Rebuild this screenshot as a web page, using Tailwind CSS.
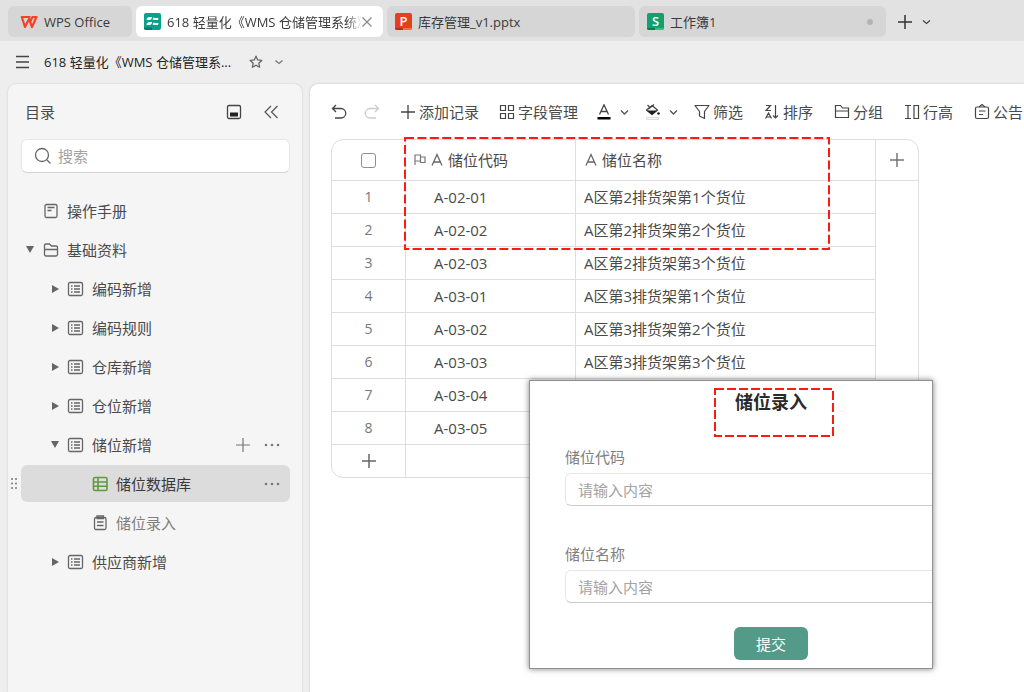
<!DOCTYPE html>
<html lang="zh-CN">
<head>
    <meta charset="UTF-8">
    <meta name="viewport" content="width=device-width, initial-scale=1.0">
    <title>618 轻量化《WMS 仓储管理系统》</title>
    <script src="https://cdn.jsdelivr.net/npm/@tailwindcss/browser@4"></script>
</head>
<body class="h-screen flex flex-col overflow-hidden bg-[#eeeeee] text-[15px] leading-5 text-[#4a4a4a] font-['Open_Sans','Noto_Sans_CJK_SC',sans-serif]">

    <!-- Window tabs -->
    <header class="shrink-0 flex items-center gap-1 h-[41px] pt-[6px] pb-1 px-2 bg-[#e2e2e2] text-[13px] text-[#3a3a3a]">
        <button class="flex items-center gap-1.5 w-[124px] h-[31px] px-3 rounded-md bg-[#d6d6d6]">
            <svg class="w-[18px] h-4" viewBox="0 0 18 16" fill="none" stroke="#f5402a" stroke-width="2.200" stroke-linejoin="round">
                <path d="M10.500 3H1.800L5 13 9 5l3 8L16.500 3H12.500l-2.500 5"/>
            </svg>
            WPS Office
        </button>
        <button class="flex items-center w-[247px] h-[31px] px-2 rounded-md bg-white">
            <svg class="shrink-0 w-[17px] h-[17px] mr-1.5" viewBox="0 0 17 17">
                <rect width="17" height="17" rx="2" fill="#0c9f89"/>
                <path d="M0 14.500h8V17H2a2 2 0 0 1-2-2z" fill="#067a69"/>
                <path d="M3 5l2-1h3L7.500 6 6 7H2.500zM9.500 4.500L11 5h3.500L14 7h-3.500L8.500 6.500zM3 10l2-1h3l-.5 2L6 12H2.500zM9.500 9.500L11 10h3.500L14 12h-3.500l-2-.5z" fill="#fff"/>
            </svg>
            <span class="flex-1 overflow-hidden whitespace-nowrap text-left mask-r-from-92%">618 轻量化《WMS 仓储管理系统》</span>
            <svg class="shrink-0 w-[10px] h-[10px] mr-[3px]" viewBox="0 0 10 10" stroke="#888" stroke-width="1.200"><path d="M.5.5l9 9M9.500.5l-9 9"/></svg>
        </button>
        <button class="flex items-center gap-1.5 w-[248px] h-[31px] px-2 rounded-md bg-[#d6d6d6]">
            <svg class="w-[17px] h-[17px]" viewBox="0 0 17 17">
                <rect width="17" height="17" rx="2" fill="#e2401f"/>
                <path d="M0 15h8v2H2a2 2 0 0 1-2-2z" fill="#b92c12"/><path d="M8 15h9a2 2 0 0 1-2 2H8z" fill="#ff6a45"/>
                <text x="8.500" y="13" font-size="13" font-weight="600" text-anchor="middle" fill="#fff">P</text>
            </svg>
            库存管理_v1.pptx
        </button>
        <button class="flex items-center gap-1.5 w-[247px] h-[31px] px-2 rounded-md bg-[#d6d6d6]">
            <svg class="w-[17px] h-[17px]" viewBox="0 0 17 17">
                <rect width="17" height="17" rx="2" fill="#12a06b"/>
                <path d="M0 15h8v2H2a2 2 0 0 1-2-2z" fill="#0a7a4f"/><path d="M8 15h9a2 2 0 0 1-2 2H8z" fill="#35bd8a"/>
                <text x="8.500" y="13" font-size="13" font-weight="600" text-anchor="middle" fill="#fff">S</text>
            </svg>
            工作簿1
            <span class="ml-auto mr-[5px] w-1.5 h-1.5 rounded-full bg-[#b3b3b3]"></span>
        </button>
        <button class="ml-[7px]" aria-label="新建标签">
            <svg class="w-4 h-4" viewBox="0 0 16 16" stroke="#333" stroke-width="1.500"><path d="M8 1v14M1 8h14"/></svg>
        </button>
        <button class="ml-px" aria-label="标签列表">
            <svg class="w-4 h-4" viewBox="0 0 16 16" fill="none" stroke="#444" stroke-width="1.300"><path d="M5 6.500l3.500 3 3.500-3"/></svg>
        </button>
    </header>

    <!-- Document title -->
    <div class="shrink-0 flex items-center h-[43px] px-4 pb-[2px] text-[#222]">
        <button aria-label="菜单">
            <svg class="w-[14px] h-[14px]" viewBox="0 0 14 14" stroke="#444" stroke-width="1.500"><path d="M0 1.500h13M0 7h13M0 12.500h13"/></svg>
        </button>
        <h1 class="ml-[14px] text-[13px]">618 轻量化《WMS 仓储管理系...</h1>
        <button class="ml-[18px]" aria-label="收藏">
            <svg class="w-[14px] h-[14px]" viewBox="0 0 14 14" fill="none" stroke="#666" stroke-width="1.300" stroke-linejoin="round"><path d="M7 1.200l1.700 3.700 4.100.500-3 2.800.800 4L7 10.200l-3.600 2 .8-4-3-2.800 4.100-.5z"/></svg>
        </button>
        <button class="ml-2" aria-label="更多">
            <svg class="w-4 h-4" viewBox="0 0 16 16" fill="none" stroke="#777" stroke-width="1.300"><path d="M4.500 6.500L8 9.500l3.500-3"/></svg>
        </button>
    </div>

    <div class="flex-1 min-h-0 flex gap-2 pl-2">

        <!-- Sidebar -->
        <aside class="shrink-0 w-[294px] rounded-t-lg bg-[#f5f5f5] shadow-[0_0_2px_rgba(0,0,0,0.18)] pl-[13px] pr-3">
            <div class="flex items-center h-[55px] pl-1">
                <h2>目录</h2>
                <button class="ml-auto" aria-label="面板">
                    <svg class="w-4 h-4" viewBox="0 0 16 16" fill="none" stroke="#444" stroke-width="1.300"><rect x="1.500" y="1.500" width="13" height="13" rx="1.500"/><path d="M4 8.500h8v4H4z" fill="#222" stroke="none"/></svg>
                </button>
                <button class="ml-[21px] mr-[11px]" aria-label="收起">
                    <svg class="w-4 h-4" viewBox="0 0 16 16" fill="none" stroke="#555" stroke-width="1.200"><path d="M8 2L2 8l6 6M14.500 2l-6 6 6 6"/></svg>
                </button>
            </div>
            <label class="flex items-center gap-1.5 h-[34px] px-3 rounded-md bg-white border border-[#e6e6e6] border-b-[#d4d4d4]">
                <svg class="w-[18px] h-[18px]" viewBox="0 0 18 18" fill="none" stroke="#666" stroke-width="1.300"><circle cx="8" cy="8" r="6.500"/><path d="M13 13l3.500 3.500"/></svg>
                <input type="text" placeholder="搜索" aria-label="搜索" class="flex-1 min-w-0 outline-none placeholder:text-[#a3a3a3]">
            </label>

            <nav class="flex flex-col gap-[2px] mt-[19px]">
                <a href="#" class="flex items-center gap-2 h-[37px] pl-[22px]">
                    <svg class="w-4 h-4" viewBox="0 0 16 16" fill="none" stroke="#666" stroke-width="1.300"><rect x="2" y="1.500" width="12" height="13" rx="1.500"/><path d="M4.500 4.500h7M4.500 7.500h4"/></svg>
                    操作手册
                </a>
                <a href="#" class="flex items-center h-[37px] pl-[5px]">
                    <svg class="w-2 h-4 mr-[9px]" viewBox="0 0 8 16" fill="#666"><path d="M0 4h8l-4 7z"/></svg>
                    <svg class="w-4 h-4 mr-2" viewBox="0 0 16 16" fill="none" stroke="#666" stroke-width="1.300"><path d="M1.500 3.500a1.500 1.500 0 0 1 1.500-1.500h3.500l2 2H13a1.500 1.500 0 0 1 1.500 1.500V12.500a1.500 1.500 0 0 1-1.500 1.500H3a1.500 1.500 0 0 1-1.500-1.500zM1.500 7.500h13"/></svg>
                    基础资料
                </a>
                <a href="#" class="flex items-center h-[37px] pl-[30px]">
                    <svg class="w-2 h-4 mr-2" viewBox="0 0 8 16" fill="#666"><path d="M1 4l7 4-7 4z"/></svg>
                    <svg class="w-[17px] h-4 mr-2" viewBox="0 0 17 16"><use href="#form-icon"/></svg>
                    编码新增
                </a>
                <a href="#" class="flex items-center h-[37px] pl-[30px]">
                    <svg class="w-2 h-4 mr-2" viewBox="0 0 8 16" fill="#666"><path d="M1 4l7 4-7 4z"/></svg>
                    <svg class="w-[17px] h-4 mr-2" viewBox="0 0 17 16"><use href="#form-icon"/></svg>
                    编码规则
                </a>
                <a href="#" class="flex items-center h-[37px] pl-[30px]">
                    <svg class="w-2 h-4 mr-2" viewBox="0 0 8 16" fill="#666"><path d="M1 4l7 4-7 4z"/></svg>
                    <svg class="w-[17px] h-4 mr-2" viewBox="0 0 17 16"><use href="#form-icon"/></svg>
                    仓库新增
                </a>
                <a href="#" class="flex items-center h-[37px] pl-[30px]">
                    <svg class="w-2 h-4 mr-2" viewBox="0 0 8 16" fill="#666"><path d="M1 4l7 4-7 4z"/></svg>
                    <svg class="w-[17px] h-4 mr-2" viewBox="0 0 17 16"><use href="#form-icon"/></svg>
                    仓位新增
                </a>
                <div class="flex items-center h-[37px] pl-[30px] pr-[9px]">
                    <a href="#" class="flex items-center">
                        <svg class="w-2 h-4 mr-2" viewBox="0 0 8 16" fill="#666"><path d="M0 4h8l-4 7z"/></svg>
                        <svg class="w-[17px] h-4 mr-2" viewBox="0 0 17 16"><use href="#form-icon"/></svg>
                        储位新增
                    </a>
                    <button class="ml-auto" aria-label="新增"><svg class="w-4 h-4" viewBox="0 0 16 16" stroke="#777" stroke-width="1.200"><path d="M8 1v14M1 8h14"/></svg></button>
                    <button class="ml-3" aria-label="更多"><svg class="w-[18px] h-4" viewBox="0 0 18 16" fill="#777"><circle cx="3" cy="8" r="1.300"/><circle cx="9" cy="8" r="1.300"/><circle cx="15" cy="8" r="1.300"/></svg></button>
                </div>
                <div class="relative flex items-center h-[37px] pl-[71px] pr-[9px] rounded-md bg-[#dcdcdc] text-[#3a3a3a]">
                    <svg class="absolute -left-[11px] w-2 h-4" viewBox="0 0 8 16" fill="#777"><circle cx="2" cy="3" r="1"/><circle cx="6" cy="3" r="1"/><circle cx="2" cy="7.500" r="1"/><circle cx="6" cy="7.500" r="1"/><circle cx="2" cy="12" r="1"/><circle cx="6" cy="12" r="1"/></svg>
                    <a href="#" class="flex items-center gap-2">
                        <svg class="w-4 h-4" viewBox="0 0 16 16" fill="none" stroke="#5f9a3c" stroke-width="1.600"><rect x="1.500" y="1.500" width="13.500" height="13" rx="1.500"/><path d="M6 1.500v13M1.500 6H15M1.500 10.300H15"/></svg>
                        储位数据库
                    </a>
                    <button class="ml-auto" aria-label="更多"><svg class="w-[18px] h-4" viewBox="0 0 18 16" fill="#777"><circle cx="3" cy="8" r="1.300"/><circle cx="9" cy="8" r="1.300"/><circle cx="15" cy="8" r="1.300"/></svg></button>
                </div>
                <a href="#" class="flex items-center gap-2 h-[37px] pl-[71px] text-[#7f7f7f]">
                    <svg class="w-4 h-4" viewBox="0 0 16 16" fill="none" stroke="#666" stroke-width="1.300"><rect x="2.500" y="2.500" width="11.500" height="12" rx="1.500"/><path d="M5 1h6.500v2.500H5zM5 7h6.500M5 10.500h6.500"/></svg>
                    储位录入
                </a>
                <a href="#" class="flex items-center h-[37px] pl-[30px]">
                    <svg class="w-2 h-4 mr-2" viewBox="0 0 8 16" fill="#666"><path d="M1 4l7 4-7 4z"/></svg>
                    <svg class="w-[17px] h-4 mr-2" viewBox="0 0 17 16"><use href="#form-icon"/></svg>
                    供应商新增
                </a>
            </nav>
        </aside>

        <!-- Sheet -->
        <main class="relative flex-1 min-w-0 rounded-tl-lg bg-white shadow-[0_0_2px_rgba(0,0,0,0.25)] pl-[21px]">
            <div class="flex items-center h-[55px] whitespace-nowrap">
                <button aria-label="撤销"><svg class="w-4 h-4" viewBox="0 0 16 16" fill="none" stroke="#444" stroke-width="1.300"><path d="M5 1L1.500 4.500 5 8M1.500 4.500H10a4.700 4.700 0 0 1 0 9.500H4"/></svg></button>
                <button class="ml-[17px]" aria-label="重做"><svg class="w-4 h-4" viewBox="0 0 16 16" fill="none" stroke="#ccc" stroke-width="1.300"><path d="M11 1l3.500 3.500L11 8M14.500 4.500H6A4.700 4.700 0 0 0 6 14h6"/></svg></button>
                <button class="flex items-center gap-[3px] ml-5"><svg class="w-4 h-4" viewBox="0 0 16 16" stroke="#444" stroke-width="1.300"><path d="M8 1v14M1 8h14"/></svg>添加记录</button>
                <button class="flex items-center gap-[3px] ml-5"><svg class="w-4 h-4" viewBox="0 0 16 16" fill="none" stroke="#444" stroke-width="1.200"><path d="M1.500 1.500h5v5h-5zM9.500 1.500h5v5h-5zM1.500 9.500h5v5h-5zM9.500 9.500h5v5h-5z"/></svg>字段管理</button>
                <button class="flex items-center gap-2 ml-[18px]" aria-label="字体颜色"><svg class="w-4 h-4" viewBox="0 0 16 16"><path d="M3.500 10.500L8 .8l4.500 9.700M5 7.500h6" fill="none" stroke="#444" stroke-width="1.300"/><path d="M1.500 13h13v2.500h-13z"/></svg><svg class="w-[9px] h-4" viewBox="0 0 9 16" fill="none" stroke="#555" stroke-width="1.300"><path d="M1 6.500L4.500 10 8 6.500"/></svg></button>
                <button class="flex items-center gap-2 ml-4" aria-label="填充颜色"><svg class="w-4 h-4" viewBox="0 0 16 16"><path d="M2.500 1l3 3M9 .5L3.500 5M7 1.500L12.500 6 7 10.500 1.500 6z" fill="none" stroke="#444" stroke-width="1.200"/><path d="M1.500 6.500h11L7 11z" fill="#222"/><circle cx="13.500" cy="9.500" r="1.300" fill="#222"/><path d="M1.500 13.500h12v2h-12z" fill="#fff" stroke="#ddd"/></svg><svg class="w-[9px] h-4" viewBox="0 0 9 16" fill="none" stroke="#555" stroke-width="1.300"><path d="M1 6.500L4.500 10 8 6.500"/></svg></button>
                <button class="flex items-center gap-[3px] ml-4"><svg class="w-4 h-4" viewBox="0 0 16 16" fill="none" stroke="#444" stroke-width="1.200" stroke-linejoin="round"><path d="M1 1.500h14l-4.500 6v7l-5-2.500V7.500z"/></svg>筛选</button>
                <button class="flex items-center gap-[3px] ml-[21px]"><svg class="w-4 h-4" viewBox="0 0 16 16" fill="none" stroke="#444" stroke-width="1.200"><path d="M2 1.500h4.500L2 6.500h5M1.500 14.500l3-5.500 3 5.500M2.500 13h4M11.500 1v13M9 11.500l2.500 2.500 2.500-2.500"/></svg>排序</button>
                <button class="flex items-center gap-[3px] ml-[21px]"><svg class="w-4 h-4" viewBox="0 0 16 16" fill="none" stroke="#444" stroke-width="1.200"><path d="M1.500 1.500h5l2 2.500h6v9.500h-13zM1.500 7h13"/></svg>分组</button>
                <button class="flex items-center gap-[3px] ml-[21px]"><svg class="w-4 h-4" viewBox="0 0 16 16" fill="none" stroke="#444" stroke-width="1.200"><path d="M1 1.500h6M4 1.500v13M1 14.500h6M10 1.500h4.500v13H10z"/></svg>行高</button>
                <button class="flex items-center gap-[3px] ml-[21px]"><svg class="w-4 h-4" viewBox="0 0 16 16" fill="none" stroke="#444" stroke-width="1.200"><rect x="1.500" y="3" width="13" height="11.500" rx="1.500"/><path d="M5 3l3-2.500L11 3M5 7h6.500M5 10.500h4"/></svg>公告</button>
            </div>

            <div class="relative w-[588px]">
                <table class="w-full table-fixed border-separate border-spacing-0 rounded-xl border border-[#dedede] text-left">
                    <colgroup><col class="w-[74px]"><col class="w-[170px]"><col><col class="w-[42px]"></colgroup>
                    <thead>
                        <tr class="h-[41px]">
                            <th class="border-r border-b border-[#dedede] p-0"><input type="checkbox" aria-label="全选" class="block mx-auto appearance-none w-[15px] h-[15px] rounded-[3px] border border-[#8b8f99]"></th>
                            <th class="border-r border-b border-[#dedede] p-0 pl-2 font-normal">
                                <div class="flex items-center gap-[5px]">
                                    <svg class="w-3 h-4" viewBox="0 0 12 16" fill="none" stroke="#777" stroke-width="1.200"><path d="M1 13V3h5.500v6H1M6.500 5H11v5.500H6.500V9"/></svg>
                                    <svg class="w-3 h-4" viewBox="0 0 12 16" fill="none" stroke="#666" stroke-width="1.300"><path d="M1 13.500L6 2.500l5 11M2.800 10h6.500"/></svg>
                                    储位代码
                                </div>
                            </th>
                            <th class="border-r border-b border-[#dedede] p-0 pl-[9px] font-normal">
                                <div class="flex items-center gap-[5px]">
                                    <svg class="w-3 h-4" viewBox="0 0 12 16" fill="none" stroke="#666" stroke-width="1.300"><path d="M1 13.500L6 2.500l5 11M2.800 10h6.500"/></svg>
                                    储位名称
                                </div>
                            </th>
                            <th class="border-b border-[#dedede] p-0"><button class="block mx-auto" aria-label="新增字段"><svg class="w-4 h-4" viewBox="0 0 16 16" stroke="#777" stroke-width="1.500"><path d="M8 1v14M1 8h14"/></svg></button></th>
                        </tr>
                    </thead>
                    <tbody id="rows"></tbody>
                    <tfoot>
                        <tr class="h-[32px]">
                            <td class="border-r border-[#dedede] p-0"><button class="block mx-auto" aria-label="新增记录"><svg class="w-4 h-4" viewBox="0 0 16 16" stroke="#666" stroke-width="1.500"><path d="M8 1v14M1 8h14"/></svg></button></td>
                            <td colspan="2" class="border-r border-[#dedede]"></td>
                            <td></td>
                        </tr>
                    </tfoot>
                </table>
                <svg class="absolute -top-[2px] left-[73px] w-[426px] h-[114px] pointer-events-none" fill="none" stroke="#ff1a10" stroke-width="2"><rect x="1" y="1" width="424" height="111" stroke-dasharray="9 3.400"/></svg>
            </div>

            <!-- Entry form window -->
            <form class="absolute left-[220px] top-[297px] w-[402px] h-[287px] overflow-hidden bg-white pl-[35px] shadow-[0_0_0_1px_#909090,0_0_6px_1px_rgba(0,0,0,0.5)]">
                <h2 class="w-[412px] pt-[9px] text-center text-[18px] leading-6 font-bold text-[#2a2a2a]">储位录入</h2>
                <svg class="absolute left-[184px] top-[7px] w-[120px] h-[50px]" fill="none" stroke="#ff1a10" stroke-width="2"><rect x="1" y="1" width="118" height="47" stroke-dasharray="9 3"/></svg>
                <label for="code" class="block mt-[33px] text-[#808080]">储位代码</label>
                <input id="code" type="text" placeholder="请输入内容" class="block mt-[6px] w-[412px] h-[33px] px-3 rounded-md border border-[#e6e6e6] border-b-[#ccc] outline-none placeholder:text-[#a3a3a3]">
                <label for="name" class="block mt-[38px] text-[#808080]">储位名称</label>
                <input id="name" type="text" placeholder="请输入内容" class="block mt-[6px] w-[412px] h-[33px] px-3 rounded-md border border-[#e6e6e6] border-b-[#ccc] outline-none placeholder:text-[#a3a3a3]">
                <div class="w-[412px] mt-6 text-center">
                    <button type="button" class="w-[74px] h-[33px] rounded-md bg-[#539a89] text-white">提交</button>
                </div>
            </form>
        </main>
    </div>

    <svg class="hidden">
        <symbol id="form-icon" viewBox="0 0 17 16">
            <rect x="1.500" y="1.500" width="14" height="13" rx="1.500" fill="none" stroke="#666" stroke-width="1.300"/>
            <path d="M4 5h1.500M7 5h6M4 8h1.500M7 8h6M4 11h1.500M7 11h6" stroke="#666" stroke-width="1.300"/>
        </symbol>
    </svg>

    <script>
        const records = [
            ['A-02-01', 'A区第2排货架第1个货位'],
            ['A-02-02', 'A区第2排货架第2个货位'],
            ['A-02-03', 'A区第2排货架第3个货位'],
            ['A-03-01', 'A区第3排货架第1个货位'],
            ['A-03-02', 'A区第3排货架第2个货位'],
            ['A-03-03', 'A区第3排货架第3个货位'],
            ['A-03-04', 'A区第3排货架第4个货位'],
            ['A-03-05', 'A区第3排货架第5个货位'],
        ];
        document.getElementById('rows').innerHTML = records.map(([code, name], i) => `
            <tr class="h-[33px]">
                <td class="border-r border-b border-[#dedede] p-0 text-center text-[14px] text-[#777]">${i + 1}</td>
                <td class="border-r border-b border-[#dedede] p-0 pl-[28px]">${code}</td>
                <td class="border-r border-b border-[#dedede] p-0 pl-2">${name}</td>
                <td class="p-0"></td>
            </tr>`).join('');
    </script>
</body>
</html>
